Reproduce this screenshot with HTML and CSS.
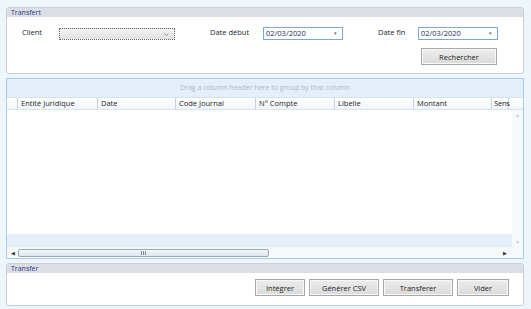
FILE: index.html
```html
<!DOCTYPE html>
<html lang="fr">
  <head>
    <meta charset="UTF-8" />
    <title>Transfert</title>
    <link rel="stylesheet" href="styles.css">
  </head>
  <body>
    <div class="page">
      <div class="panel panel-filters">
        <div class="panel-title">Transfert</div>
        <div class="panel-body filters-body">
          <div class="filters-row">
            <span class="lbl lbl-client">Client</span>
            <div class="select-client">
              <svg class="caret" width="5" height="3" viewBox="0 0 5 3"><path d="M0.5 0.5 L2.5 2.5 L4.5 0.5" fill="none" stroke="#777" stroke-width="0.8"/></svg>
            </div>
            <span class="lbl lbl-debut">Date début</span>
            <div class="date-input">02/03/2020<span class="dd">&#9662;</span></div>
            <span class="lbl lbl-fin">Date fin</span>
            <div class="date-input">02/03/2020<span class="dd">&#9662;</span></div>
          </div>
          <div class="search-row">
            <button class="btn btn-search">Rechercher</button>
          </div>
        </div>
      </div>

      <div class="grid">
        <div class="group-panel">Drag a column header here to group by that column</div>
        <div class="grid-header">
          <div class="col col-indent"></div>
          <div class="col c1">Entité Juridique</div>
          <div class="col c2">Date</div>
          <div class="col c3">Code Journal</div>
          <div class="col c4">N° Compte</div>
          <div class="col c5">Libelle</div>
          <div class="col c6">Montant</div>
          <div class="col c7">Sens</div>
          <div class="col-rest"></div>
        </div>
        <div class="grid-main">
          <div class="grid-rows">
            <div class="rows-area"></div>
            <div class="rows-filler"></div>
          </div>
          <div class="vscroll">
            <span class="arrow up">&#9650;</span>
            <span class="arrow down">&#9660;</span>
          </div>
        </div>
        <div class="hscroll">
          <span class="harrow">&#9664;</span>
          <div class="htrack"><span class="grip"></span></div>
          <span class="harrow hright">&#9654;</span>
        </div>
      </div>

      <div class="panel panel-actions">
        <div class="panel-title">Transfer</div>
        <div class="panel-body actions-body">
          <button class="btn btn-a1">Intégrer</button>
          <button class="btn btn-a2">Générer CSV</button>
          <button class="btn btn-a2">Transferer</button>
          <button class="btn btn-a3">Vider</button>
        </div>
      </div>
    </div>
  </body>
</html>
```

FILE: styles.css
```css
html, body {
  margin: 0;
  padding: 0;
}

body {
  width: 531px;
  height: 309px;
  overflow: hidden;
  background: #eef5fb;
  font-family: "Open Sans", "Noto Sans", sans-serif;
  font-size: 7.5px;
  color: #1e1e1e;
}

.page {
  display: flex;
  flex-direction: column;
  padding: 7px 7px 0 6px;
  gap: 4px;
}

.panel {
  background: #fff;
  border: 1px solid #cbced5;
  border-radius: 3px;
  overflow: hidden;
}

.panel-title {
  height: 9px;
  line-height: 9px;
  padding-left: 4px;
  background: #dcdee6;
  color: #283a82;
  font-size: 7px;
}

.panel-filters {
  height: 65px;
}

.filters-body {
  padding: 10px 0 0 15px;
}

.filters-row {
  display: flex;
  align-items: center;
  height: 13px;
}

.lbl {
  line-height: 9px;
  margin-top: -3px;
}

.lbl-client { width: 37px; }
.lbl-debut { width: 53px; margin-left: 35px; }
.lbl-fin { width: 40px; margin-left: 35px; }

.select-client {
  box-sizing: border-box;
  width: 116px;
  height: 12px;
  border: 1px dotted #6b6b6b;
  background: linear-gradient(#f4f4f4, #e1e1e1);
  position: relative;
}

.select-client .caret {
  position: absolute;
  right: 5px;
  top: 4px;
}

.date-input {
  box-sizing: border-box;
  width: 80px;
  height: 13px;
  border: 1px solid #7ea6d8;
  background: #fff;
  padding-left: 2px;
  line-height: 11px;
  color: #1d2c5c;
  display: flex;
  justify-content: space-between;
}

.date-input .dd {
  font-size: 5px;
  color: #666;
  padding-right: 5px;
}

.search-row {
  display: flex;
  justify-content: flex-end;
  padding-right: 26px;
  margin-top: 8px;
}

.btn {
  box-sizing: border-box;
  height: 17px;
  border: 1px solid #a8a8a8;
  box-shadow: inset 0 0 0 1px #f8f8f8;
  background: linear-gradient(#ededed, #dadada);
  font-family: "Open Sans", "Noto Sans", sans-serif;
  font-size: 7.5px;
  color: #1e1e1e;
  padding: 0;
}

.btn-search { width: 76px; }
.btn-a1 { width: 50px; }
.btn-a2 { width: 70px; }
.btn-a3 { width: 52px; }

.grid {
  height: 179px;
  border: 1px solid #a9cbeb;
  background: #fff;
  display: flex;
  flex-direction: column;
}

.group-panel {
  height: 18px;
  line-height: 18px;
  background: #e5eff9;
  border-bottom: 1px solid #d5e3f1;
  color: #a9b8c8;
  font-size: 7px;
  padding-left: 173px;
}

.grid-header {
  display: flex;
  height: 11px;
  line-height: 11px;
  background: linear-gradient(#ffffff, #f1f5f9);
  border-bottom: 1px solid #d9e3ec;
}

.col {
  box-sizing: border-box;
  border-left: 1px solid #c4d2df;
  padding-left: 3px;
  white-space: nowrap;
}

.col-indent { width: 10px; border-left: none; }
.c1 { width: 80px; }
.c2 { width: 78px; }
.c3 { width: 80px; }
.c4 { width: 79px; }
.c5 { width: 79px; }
.c6 { width: 78px; }
.c7 { width: 18px; padding-left: 2px; border-right: 1px solid #c4d2df; letter-spacing: -0.2px; }

.col-rest { flex: 1; }

.grid-main {
  flex: 1;
  display: flex;
}

.grid-rows {
  flex: 1;
  display: flex;
  flex-direction: column;
}

.rows-area {
  flex: 1;
  background: #fff;
}

.rows-filler {
  height: 13px;
  background: #e5eff9;
}

.vscroll {
  width: 11px;
  background: #f7f8f9;
  display: flex;
  flex-direction: column;
  justify-content: space-between;
  align-items: center;
  padding: 2px 0;
}

.arrow {
  font-size: 5px;
  color: #c5c9cd;
}

.hscroll {
  height: 11px;
  display: flex;
  align-items: center;
  background: #f7f8f9;
  padding-left: 4px;
}

.harrow {
  font-size: 5px;
  color: #333;
  width: 7px;
}

.hright {
  margin-left: auto;
  margin-right: 13px;
}

.htrack {
  box-sizing: border-box;
  width: 251px;
  height: 8px;
  border: 1px solid #9aa8b7;
  border-radius: 2px;
  background: linear-gradient(#f4f7fa, #dfe6ee);
  display: flex;
  justify-content: center;
  align-items: center;
}

.grip {
  width: 5px;
  height: 4px;
  background: repeating-linear-gradient(90deg, #7d8894 0 1px, transparent 1px 2px);
}

.panel-actions {
  height: 41px;
}

.actions-body {
  display: flex;
  justify-content: flex-end;
  gap: 4px;
  padding: 6px 14px 0 0;
}
```
